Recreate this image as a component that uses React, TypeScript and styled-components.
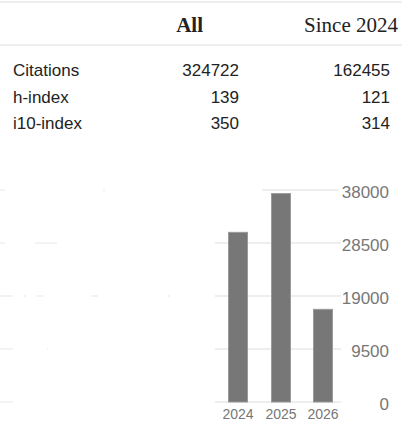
import styled, { createGlobalStyle } from 'styled-components'

const GlobalStyle = createGlobalStyle`
  body {
    margin: 0;
    background: #fff;
  }
`

const Page = styled.div`
  width: 417px;
  height: 442px;
  overflow: hidden;
`

const StatsTable = styled.section`
  width: 402px;
  margin-top: 1px;
  border-top: 2px solid #eeeeee;
`

const Grid = styled.div`
  display: grid;
  grid-template-columns: 140px 105px 157px;
`

const HeaderRow = styled(Grid)`
  padding-top: 3px;
  border-bottom: 2px solid #eeeeee;
  font-family: 'Liberation Serif', 'Times New Roman', serif;
  font-size: 21px;
  line-height: 38px;
  color: #222;
`

const HeadCell = styled.div<{ $pr: number; $bold?: boolean }>`
  text-align: right;
  padding-right: ${(p) => p.$pr}px;
  font-weight: ${(p) => (p.$bold ? 700 : 400)};
`

const Body = styled.div`
  padding-top: 12px;
  font-family: 'Liberation Sans', Arial, sans-serif;
  font-size: 17px;
  line-height: 26.7px;
  color: #222;
`

const Label = styled.div`
  padding-left: 13px;
`

const Num = styled.div<{ $pr: number }>`
  text-align: right;
  padding-right: ${(p) => p.$pr}px;
`

const Chart = styled.svg`
  display: block;
  margin-top: 12px;
  font-family: 'Liberation Sans', Arial, sans-serif;
`

const rows = [
  { label: 'Citations', all: 324722, since: 162455 },
  { label: 'h-index', all: 139, since: 121 },
  { label: 'i10-index', all: 350, since: 314 },
]

const bars = [
  { year: 2024, value: 30500, x: 228 },
  { year: 2025, value: 37450, x: 271 },
  { year: 2026, value: 16700, x: 313 },
]

const ticks = [38000, 28500, 19000, 9500, 0]
const base = 252
const max = 38000
const span = 212

// faint leftovers of the hidden years, as in the original
const ghosts: [number, number, number][] = [
  [40, 0, 5],
  [40, 103, 105],
  [93, 0, 5],
  [93, 35, 57],
  [146, 0, 13],
  [146, 24, 26],
  [146, 37, 44],
  [146, 91, 98],
  [146, 167, 170],
  [199, 0, 13],
  [199, 47, 48],
  [252, 0, 13],
]

export default function App() {
  return (
    <Page>
      <GlobalStyle />
      <StatsTable>
        <HeaderRow>
          <div />
          <HeadCell $pr={42} $bold>
            All
          </HeadCell>
          <HeadCell $pr={4}>Since 2024</HeadCell>
        </HeaderRow>
        <Body>
          {rows.map((r) => (
            <Grid key={r.label}>
              <Label>{r.label}</Label>
              <Num $pr={6}>{r.all}</Num>
              <Num $pr={12}>{r.since}</Num>
            </Grid>
          ))}
        </Body>
      </StatsTable>

      <Chart width={417} height={292} viewBox="0 0 417 292">
        {ghosts.map(([y, x1, x2], i) => (
          <line key={i} x1={x1} x2={x2} y1={y} y2={y} stroke="#f3f3f3" strokeWidth={2} />
        ))}
        {ticks.map((t, i) => {
          const y = base - (t / max) * span
          return (
            <g key={t}>
              <line
                x1={i === 0 ? 262 : 215}
                x2={i === 0 ? 338 : 341}
                y1={y}
                y2={y}
                stroke="#eeeeee"
                strokeWidth={2}
              />
              <text x={389} y={y + 8} textAnchor="end" fontSize={17} fill="#777">
                {t}
              </text>
            </g>
          )
        })}
        {bars.map((b) => {
          const h = (b.value / max) * span
          return (
            <g key={b.year}>
              <rect
                x={b.x + 0.5}
                y={base - h + 0.5}
                width={19}
                height={h - 0.5}
                fill="#777"
                stroke="#9a9a9a"
                strokeWidth={1}
              />
              <text x={b.x + 10} y={base + 17} textAnchor="middle" fontSize={14} fill="#777">
                {b.year}
              </text>
            </g>
          )
        })}
      </Chart>
    </Page>
  )
}
